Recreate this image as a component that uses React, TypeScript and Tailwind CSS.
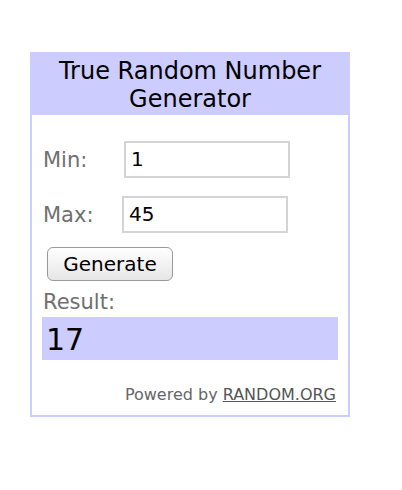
export default function App() {
  return (
    <div className="w-[402px] h-[490px] bg-white pt-[52px] pl-[30px]" style={{ fontFamily: '"DejaVu Sans", Verdana, sans-serif' }}>
      <div className="w-[320px] h-[365px] border-2 border-t-0 border-[#ccccff]">
        <div className="bg-[#ccccff] h-[63px] -mx-[2px] pt-[5px] text-center text-[24px] leading-[28px] text-black">
          True Random Number
          <br />
          Generator
        </div>
        <div className="px-[10px]">
          <div className="flex items-center h-[38px] mt-[25px]">
            <span className="w-[82px] pl-[1px] pt-[4px] text-[21px] text-[#6f6f6f]">Min:</span>
            <div className="w-[166px] h-[37px] border-2 border-[#d4d4d4] bg-white flex items-center pl-[5px] text-[20px] text-black">1</div>
          </div>
          <div className="flex items-center h-[38px] mt-[17px]">
            <span className="w-[80px] pl-[1px] pt-[4px] text-[21px] text-[#6f6f6f]">Max:</span>
            <div className="w-[166px] h-[37px] border-2 border-[#d4d4d4] bg-white flex items-center pl-[5px] text-[20px] text-black">45</div>
          </div>
          <button className="mt-[14px] ml-[5px] w-[126px] h-[34px] rounded-[6px] border border-[#9a9a9a] bg-gradient-to-b from-white to-[#e6e6e6] text-[20px] text-black flex items-center justify-center">
            Generate
          </button>
          <div className="mt-[8px] pl-[1px] text-[21px] leading-[26px] text-[#6f6f6f]">Result:</div>
          <div className="mt-[2px] h-[43px] bg-[#ccccff] flex items-center pl-[4px] pt-[2px] text-[30px] text-black">17</div>
          <div className="mt-[23px] pr-[2px] text-right text-[16px] text-[#666]">
            Powered by <span className="underline text-[#555]">RANDOM.ORG</span>
          </div>
        </div>
      </div>
    </div>
  );
}
